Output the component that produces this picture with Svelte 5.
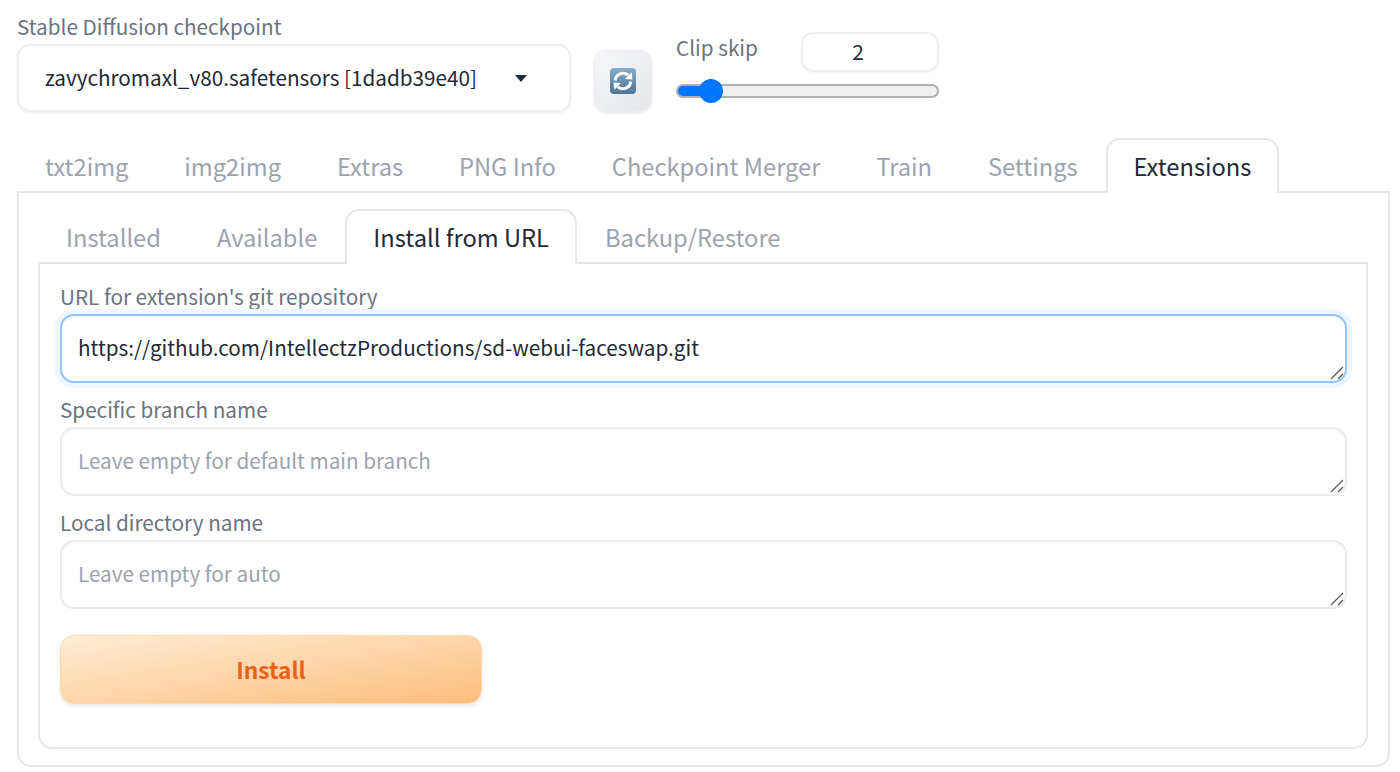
<script>
  const mainTabs = ['txt2img', 'img2img', 'Extras', 'PNG Info', 'Checkpoint Merger', 'Train', 'Settings', 'Extensions'];
  const subTabs = ['Installed', 'Available', 'Install from URL', 'Backup/Restore'];

  let url = $state('https://github.com/IntellectzProductions/sd-webui-faceswap.git');
  let branch = $state('');
  let dir = $state('');
  let clipSkip = $state(2);

  let fill = $derived(((clipSkip - 1) / 11) * 100 + 8);
</script>

{#snippet grip()}
  <svg class="grip" width="14" height="14" viewBox="0 0 14 14">
    <path d="M1 13 L13 1 M8 13 L13 8" stroke="#555" stroke-width="1.2" fill="none" />
  </svg>
{/snippet}

<div class="page">
  <div class="top">
    <div class="checkpoint">
      <div class="label">Stable Diffusion checkpoint</div>
      <div class="select">
        <span>zavychromaxl_v80.safetensors [1dadb39e40]</span>
        <i class="caret"></i>
      </div>
    </div>
    <button class="refresh" aria-label="Refresh">
      <svg width="26" height="26" viewBox="0 0 26 26">
        <defs>
          <linearGradient id="emoji" x1="0" y1="0" x2="0" y2="1">
            <stop offset="0" stop-color="#86acca" />
            <stop offset="1" stop-color="#4f7596" />
          </linearGradient>
        </defs>
        <rect width="26" height="26" rx="4" fill="url(#emoji)" />
        <path d="M5.2 12.5 A7.9 7.9 0 0 1 18.2 7.2" fill="none" stroke="#fff" stroke-width="3" />
        <path d="M15 11 L22.5 11.5 L21.6 4.2 Z" fill="#fff" />
        <path d="M20.8 13.5 A7.9 7.9 0 0 1 7.8 18.8" fill="none" stroke="#fff" stroke-width="3" />
        <path d="M11 15 L3.5 14.5 L4.4 21.8 Z" fill="#fff" />
      </svg>
    </button>
    <div class="clip">
      <div class="clip-head">
        <span class="label">Clip skip</span>
        <input class="num" type="text" bind:value={clipSkip} />
      </div>
      <input class="range" type="range" min="1" max="12" step="1" bind:value={clipSkip} style="--fill: {fill}%" />
    </div>
  </div>

  <div class="tabs main-tabs">
    {#each mainTabs as tab}
      <button class="tab" class:active={tab === 'Extensions'}>{tab}</button>
    {/each}
  </div>
  <div class="panel outer">
    <div class="tabs">
      {#each subTabs as tab}
        <button class="tab" class:active={tab === 'Install from URL'}>{tab}</button>
      {/each}
    </div>
    <div class="panel inner">
      <label class="field">
        <span class="label">URL for extension's git repository</span>
        <span class="area">
          <textarea class="focused" rows="1" bind:value={url}></textarea>
          {@render grip()}
        </span>
      </label>
      <label class="field">
        <span class="label">Specific branch name</span>
        <span class="area">
          <textarea rows="1" placeholder="Leave empty for default main branch" bind:value={branch}></textarea>
          {@render grip()}
        </span>
      </label>
      <label class="field">
        <span class="label">Local directory name</span>
        <span class="area">
          <textarea rows="1" placeholder="Leave empty for auto" bind:value={dir}></textarea>
          {@render grip()}
        </span>
      </label>
      <button class="install">Install</button>
    </div>
  </div>
</div>

<style>
  :global(body) {
    background: #fff;
    font-family: "Noto Sans CJK JP", "Noto Sans", sans-serif;
  }

  .page {
    padding: 10px 10px 5px 17px;
    box-sizing: border-box;
    height: 772px;
    overflow: hidden;
    color: #1f2937;
    font-size: 24px;
  }

  .label {
    color: #6b7280;
    font-size: 20.7px;
    line-height: 32px;
    display: block;
  }

  .top {
    display: flex;
    align-items: flex-start;
    height: 128px;
  }

  .checkpoint {
    width: 554px;
  }

  .select {
    height: 68px;
    margin-top: 2px;
    box-sizing: border-box;
    border: 2px solid #eceef2;
    border-radius: 13px;
    box-shadow: 0 1px 3px rgba(0, 0, 0, 0.08);
    padding: 0 42px 0 26px;
    display: flex;
    align-items: center;
    justify-content: space-between;
    font-size: 20.7px;
    white-space: nowrap;
    background: #fff;
  }

  .select span {
    padding-bottom: 3px;
  }

  .caret {
    width: 0;
    height: 0;
    border-left: 6.5px solid transparent;
    border-right: 6.5px solid transparent;
    border-top: 7px solid #1f2937;
  }

  .refresh {
    width: 58px;
    height: 62px;
    margin: 40px 24px 0 23px;
    padding: 0;
    border: 1px solid #eceef1;
    border-radius: 12px;
    background: linear-gradient(to bottom right, #f5f6f8, #e5e7eb);
    box-shadow: 0 1px 3px rgba(0, 0, 0, 0.1);
    display: flex;
    align-items: center;
    justify-content: center;
  }

  .clip {
    width: 263px;
    margin-top: 22px;
  }

  .clip-head {
    display: flex;
    align-items: flex-start;
    justify-content: space-between;
    height: 40px;
  }

  .clip-head .label {
    margin-top: -1px;
  }

  .num {
    width: 138px;
    height: 40px;
    box-sizing: border-box;
    padding: 0 24px 2px 0;
    border: 2px solid #eceef2;
    border-radius: 12px;
    text-align: center;
    font: inherit;
    font-size: 21px;
    color: #1f2937;
    outline: none;
    box-shadow: 0 1px 2px rgba(0, 0, 0, 0.04);
  }

  .range {
    -webkit-appearance: none;
    appearance: none;
    display: block;
    width: 100%;
    height: 14px;
    margin: 12px 0 0;
    box-sizing: border-box;
    border: 2px solid #b0b0b0;
    border-radius: 7px;
    background: linear-gradient(to right, #0075ff var(--fill), #efefef var(--fill));
  }

  .range::-webkit-slider-thumb {
    -webkit-appearance: none;
    width: 24px;
    height: 24px;
    border-radius: 50%;
    background: #0075ff;
    border: none;
  }

  .tabs {
    display: flex;
    position: relative;
    z-index: 1;
  }

  .tab {
    height: 55px;
    box-sizing: border-box;
    margin-bottom: -2px;
    padding: 0 26px 2px;
    border: 2px solid transparent;
    border-bottom: none;
    border-radius: 14px 14px 0 0;
    background: none;
    font: inherit;
    font-size: 23.7px;
    color: #9ca3af;
    white-space: nowrap;
  }

  .main-tabs .tab {
    padding: 0 25.93px 2px;
  }

  .tab.active {
    color: #1f2937;
    background: #fff;
    border-color: #e5e7eb;
  }

  .panel {
    border: 2px solid #e5e7eb;
    box-sizing: border-box;
    background: #fff;
  }

  .outer {
    width: 1373px;
    height: 576px;
    padding: 16px 20px 0 19px;
    border-radius: 0 0 14px 14px;
  }

  .inner {
    height: 487px;
    padding: 17px 19px 0 20px;
    border-radius: 0 0 14px 14px;
  }

  .field {
    display: block;
    height: 113px;
  }

  .field .label {
    line-height: 31px;
    margin-bottom: 2px;
  }

  .area {
    display: block;
    position: relative;
  }

  .grip {
    position: absolute;
    right: 3px;
    bottom: 3px;
    pointer-events: none;
  }

  textarea {
    display: block;
    width: 100%;
    height: 69px;
    box-sizing: border-box;
    padding: 13px 16px;
    border: 2px solid #e9ebef;
    border-radius: 14px;
    font: inherit;
    font-size: 20.7px;
    line-height: 36px;
    color: #1f2937;
    outline: none;
    resize: none;
    box-shadow: inset 0 1px 3px rgba(0, 0, 0, 0.05);
  }

  textarea::placeholder {
    color: #9ca3af;
    opacity: 1;
  }

  textarea.focused {
    border-color: #93c5fd;
    box-shadow: 0 0 0 5px #eff6ff, inset 0 1px 3px rgba(0, 0, 0, 0.05);
  }

  .install {
    display: block;
    width: 422px;
    height: 69px;
    margin-top: 15px;
    padding: 0 0 1px;
    border: 1.5px solid #fed7aa;
    border-radius: 14px;
    background: linear-gradient(to bottom right, #ffedd5, #fdba74);
    opacity: 0.95;
    box-shadow: 0 2px 4px rgba(0, 0, 0, 0.1);
    font: inherit;
    font-size: 22.7px;
    font-weight: 600;
    color: #ea580c;
  }
</style>
